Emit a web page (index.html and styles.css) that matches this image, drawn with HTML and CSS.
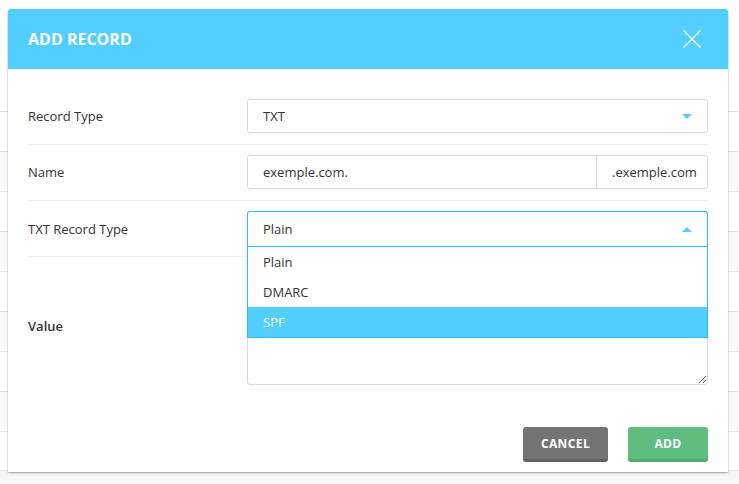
FILE: index.html
```
<!DOCTYPE html>
<html>
<head>
<meta charset="utf-8">
<link rel="stylesheet" href="styles.css">
</head>
<body>
<div class="page">
  <div class="bg-table">
    <div class="bg-head"></div>
    <div class="bg-row"></div>
    <div class="bg-row alt"></div>
    <div class="bg-row"></div>
    <div class="bg-row alt"></div>
    <div class="bg-row"></div>
    <div class="bg-row alt"></div>
    <div class="bg-row"></div>
    <div class="bg-row alt"></div>
    <div class="bg-row last"></div>
  </div>

  <div class="modal">
    <div class="modal-header">
      <h1 class="modal-title">ADD RECORD</h1>
      <svg class="close" width="18" height="18" viewBox="0 0 18 18"><path d="M0.5 0.5 L17.5 17.5 M17.5 0.5 L0.5 17.5" stroke="#fff" stroke-width="1.4" fill="none"/></svg>
    </div>
    <div class="modal-body">
      <div class="row">
        <div class="label">Record Type</div>
        <div class="control">
          <div class="select">
            <span>TXT</span>
            <span class="caret down"></span>
          </div>
        </div>
      </div>
      <div class="row">
        <div class="label">Name</div>
        <div class="control">
          <div class="group">
            <div class="group-input">exemple.com.</div>
            <div class="group-addon">.exemple.com</div>
          </div>
        </div>
      </div>
      <div class="row open-row">
        <div class="label">TXT Record Type</div>
        <div class="control">
          <div class="dropdown">
            <div class="select open">
              <span>Plain</span>
              <span class="caret up"></span>
            </div>
            <ul class="menu">
              <li class="item">Plain</li>
              <li class="item">DMARC</li>
              <li class="item active">SPF</li>
            </ul>
          </div>
        </div>
      </div>
      <div class="row value-row">
        <div class="label bold">Value</div>
        <div class="control">
          <textarea class="textarea"></textarea>
        </div>
      </div>
    </div>
    <div class="modal-footer">
      <button class="btn cancel">CANCEL</button>
      <button class="btn add">ADD</button>
    </div>
  </div>
</div>
</body>
</html>
```
FILE: styles.css
```
* { box-sizing: border-box; }
html, body { margin: 0; padding: 0; }
body {
  width: 739px;
  height: 484px;
  overflow: hidden;
  font-family: "Open Sans", "Liberation Sans", sans-serif;
  color: #333;
  background: #f6f6f6;
}
.page {
  position: relative;
  width: 739px;
  height: 484px;
}
.bg-table {
  background: #fff;
}
.bg-head {
  height: 112px;
  border-bottom: 1px solid #e4e4e4;
}
.bg-row {
  height: 40px;
  border-bottom: 1px solid #e4e4e4;
}
.bg-row.alt { background: #f9f9f9; }
.bg-row.last { height: 39px; border-bottom: 1px solid #e8e8e8; }

.modal {
  position: absolute;
  left: 8px;
  top: 9px;
  width: 720px;
  height: 463px;
  background: #fff;
  border-radius: 3px 3px 0 0;
  box-shadow: 0 1px 2px rgba(0,0,0,0.35), 0 0 1px rgba(0,0,0,0.25);
}
.modal-header {
  height: 60px;
  background: #52cffe;
  border-radius: 3px 3px 0 0;
  display: flex;
  align-items: center;
  justify-content: space-between;
  padding: 0 27px 0 20px;
}
.modal-title {
  margin: 0;
  font-size: 16px;
  font-weight: 700;
  color: #fff;
  letter-spacing: 0;
}
.close { display: block; }

.modal-body {
  padding: 20px 20px 0 20px;
}
.row {
  display: flex;
  align-items: center;
  padding: 10px 0 11px 0;
  border-bottom: 1px solid #ececec;
}
.row.open-row { padding-bottom: 10px; }
.value-row { border-bottom: none; }
.label {
  width: 219px;
  font-size: 13px;
  color: #333;
}
.label.bold { font-weight: 600; }
.control { flex: 1; }

.select {
  height: 34px;
  border: 1px solid #dcdcdc;
  border-radius: 3px;
  display: flex;
  align-items: center;
  justify-content: space-between;
  padding: 0 15px 0 15px;
  font-size: 13px;
  color: #333;
}
.caret {
  width: 0;
  height: 0;
  border-left: 5px solid transparent;
  border-right: 5px solid transparent;
}
.caret.down { border-top: 5px solid #52cffe; }
.caret.up { border-bottom: 5px solid #52cffe; }

.group {
  display: flex;
  height: 34px;
  border: 1px solid #dcdcdc;
  border-radius: 3px;
  font-size: 13px;
}
.group-input {
  flex: 1;
  display: flex;
  align-items: center;
  padding-left: 15px;
  border-right: 1px solid #dcdcdc;
}
.group-addon {
  width: 110px;
  display: flex;
  align-items: center;
  padding-left: 15px;
}

.dropdown { position: relative; }
.select.open {
  height: 35px;
  border-color: #29bff0;
  border-bottom: none;
  border-radius: 3px 3px 0 0;
}
.menu {
  position: absolute;
  left: 0;
  right: 0;
  top: 35px;
  margin: 0;
  padding: 0;
  list-style: none;
  background: #fff;
  border: 1px solid #29bff0;
  z-index: 5;
  font-size: 13px;
}
.item {
  height: 30px;
  display: flex;
  align-items: center;
  padding-left: 15px;
  color: #333;
}
.item.active {
  background: #52cffe;
  color: #fff;
}

.textarea {
  display: block;
  width: 100%;
  height: 118px;
  border: 1px solid #dcdcdc;
  border-radius: 3px;
  resize: vertical;
  font-family: inherit;
  margin: 0;
  outline: none;
}

.modal-footer {
  display: flex;
  justify-content: flex-end;
  gap: 20px;
  padding: 31px 20px 0 20px;
}
.btn {
  height: 35px;
  border: none;
  border-radius: 3px;
  color: #fff;
  font-family: "Open Sans", "Liberation Sans", sans-serif;
  font-size: 12px;
  font-weight: 700;
  letter-spacing: 0.4px;
  padding: 0;
  cursor: pointer;
}
.btn.cancel {
  width: 85px;
  background: #747474;
  border-bottom: 3px solid #606060;
}
.btn.add {
  width: 80px;
  background: #60bd7d;
  border-bottom: 3px solid #4fab6c;
}
```
